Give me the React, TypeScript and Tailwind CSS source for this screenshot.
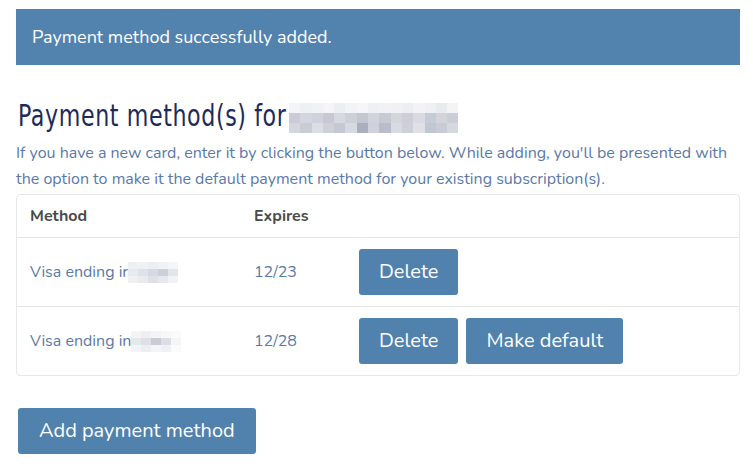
import React from "react";

const blurTop = ["#f3f4f6", "#eef0f3", "#f1f2f5", "#f5f5f7", "#eceef2", "#f2f3f6", "#f6f6f8", "#eef0f4", "#f2f2f5", "#f0f1f4", "#eceef2", "#f3f3f6", "#eff0f4", "#e9ebef", "#f4f4f7"];
const blurMid = ["#c9ccd6", "#d3d6de", "#cfd2db", "#c6c8d2", "#d7d9e0", "#cdd0d9", "#c3c7d1", "#d1d4dc", "#c8cad3", "#d4d6de", "#cccfd8", "#dadbe2", "#c5ccd6", "#d2d3db", "#cbced7"];
const blurBot = ["#d4d6de", "#c9ccd5", "#dcdee5", "#cfd1da", "#c4c8d2", "#d7d9e0", "#a9afbe", "#cfd2da", "#b9bdc9", "#d9dbe2", "#cdd0d9", "#e0e1e7", "#bfc8d2", "#c9cbd5", "#d6d8df"];

function Pixelated({ rows, cell }: { rows: string[][]; cell: string }) {
  return (
    <span className="inline-flex flex-col align-middle">
      {rows.map((r, i) => (
        <span key={i} className="flex">
          {r.map((c, j) => (
            <span key={j} className={cell} style={{ backgroundColor: c }} />
          ))}
        </span>
      ))}
    </span>
  );
}

const smallA = [
  ["#eef0f3", "#f0f1f4", "#eceef2", "#f1f2f5", "#f6f6f8"],
  ["#e8eaee", "#dfe2e8", "#d6d9e1", "#cbcfd8", "#e3e5eb"],
  ["#eef0f3", "#e9ebef", "#dfe1e7", "#e6e8ed", "#f2f3f6"],
];
const smallB = [
  ["#f3f4f6", "#eeeff3", "#f3f4f6", "#f7f8f9", "#fafafc"],
  ["#e7e8ec", "#dde0e6", "#c9ccd5", "#dcdee5", "#f4f5f7"],
  ["#f2f3f6", "#eceef2", "#f4f5f7", "#eef0f3", "#fbfbfc"],
];

function Btn({ children }: { children: React.ReactNode }) {
  return (
    <button className="h-[46px] rounded-[3px] bg-[#5182ad] px-5 text-[20px] text-white">
      {children}
    </button>
  );
}

export default function App() {
  return (
    <div className="min-h-[473px] bg-white pl-4 pr-[13px] pt-[9px] font-['Nunito','Lato','Open_Sans',sans-serif]">
      <div className="flex h-14 items-center bg-[#5283ae] px-4 text-[18px] text-white">
        Payment method successfully added.
      </div>

      <h1 className="mt-[34px] flex items-center pl-[2px] font-['DejaVu_Sans_Condensed',sans-serif] text-[30px] font-normal leading-[34px] tracking-[0.75px] text-[#1c2b57]">
        {/* narrow display face in the original; squeeze the condensed fallback */}
        <span className="w-[265px] whitespace-nowrap">
          <span className="inline-block origin-left scale-x-[0.82]">Payment method(s) for</span>
        </span>
        <span className="ml-[6px]">
          <Pixelated rows={[blurTop, blurMid, blurBot]} cell="h-[10px] w-[11.3px]" />
        </span>
      </h1>

      <p className="mt-[7px] text-[16px] leading-[26px] text-[#5a7aa6]">
        If you have a new card, enter it by clicking the button below. While adding, you'll be presented with
        the option to make it the default payment method for your existing subscription(s).
      </p>

      <div className="mt-[2px] rounded-[4px] border border-[#e8e8e8]">
        <div className="flex h-[43px] items-center border-b border-[#e6e6e6] text-[16px] font-bold text-[#4a4a4a]">
          <div className="w-[237px] pl-[13px]">Method</div>
          <div>Expires</div>
        </div>
        <div className="flex h-[69px] items-center border-b border-[#e6e6e6] text-[16px] text-[#5a7aa6]">
          <div className="flex w-[237px] items-center pl-[13px]">
            Visa ending ir
            <Pixelated rows={smallA} cell="h-[7px] w-[10px]" />
          </div>
          <div className="w-[105px]">12/23</div>
          <Btn>Delete</Btn>
        </div>
        <div className="flex h-[68px] items-center text-[16px] text-[#5a7aa6]">
          <div className="flex w-[237px] items-center pl-[13px]">
            Visa ending in
            <Pixelated rows={smallB} cell="h-[7px] w-[10px]" />
          </div>
          <div className="w-[105px]">12/28</div>
          <div className="flex gap-2">
            <Btn>Delete</Btn>
            <Btn>Make default</Btn>
          </div>
        </div>
      </div>

      <button className="ml-[2px] mt-[32px] h-[46px] rounded-[3px] bg-[#5182ad] px-[21px] text-[20px] text-white">
        Add payment method
      </button>
    </div>
  );
}
